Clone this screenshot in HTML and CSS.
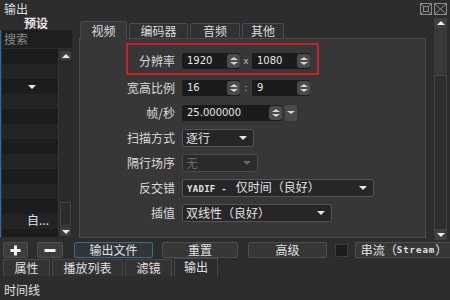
FILE: index.html
```html
<!DOCTYPE html>
<html>
<head>
<meta charset="utf-8">
<link rel="stylesheet" href="styles.css">
</head>
<body>
<div class="titlebar">
  <span class="title">输出</span>
  <span class="tb-icons">
    <svg width="12" height="12" viewBox="0 0 12 12"><rect x="0.5" y="0.5" width="11" height="11" fill="none" stroke="#8c8c8c"/><rect x="3.5" y="3.5" width="5" height="5" fill="none" stroke="#8c8c8c"/><path d="M0.5 0.5L3.5 3.5M11.5 0.5L8.5 3.5M0.5 11.5L3.5 8.5M11.5 11.5L8.5 8.5" stroke="#8c8c8c"/></svg>
    <svg width="13" height="12" viewBox="0 0 13 12"><rect x="0.5" y="0.5" width="12" height="11" fill="none" stroke="#8c8c8c"/><path d="M1 1L12 11M12 1L1 11" stroke="#8c8c8c"/></svg>
  </span>
</div>
<div class="main">
  <div class="left">
    <div class="preset-h">预设</div>
    <div class="leftbody">
      <div class="search">搜索</div>
      <div class="listwrap">
        <div class="list">
          <div class="row"></div>
          <div class="row alt"></div>
          <div class="row"><span class="tri-down"></span></div>
          <div class="row alt"></div>
          <div class="row"></div>
          <div class="row alt"></div>
          <div class="row"></div>
          <div class="row alt"></div>
          <div class="row"></div>
          <div class="row alt"></div>
          <div class="row"></div>
          <div class="row alt item"><span class="auto">自...</span></div>
          <div class="row"></div>
        </div>
        <div class="sbar small">
          <div class="sb-btn"><span class="tri-up-w"></span></div>
          <div class="sb-track"><div class="sb-thumb"></div></div>
          <div class="sb-btn"><span class="tri-down-w"></span></div>
        </div>
      </div>
    </div>
  </div>
  <div class="right">
    <div class="tabw">
      <div class="tabs">
        <div class="tab sel t1">视频</div>
        <div class="tab t2">编码器</div>
        <div class="tab t3">音频</div>
        <div class="tab t4">其他</div>
      </div>
      <div class="pane">
        <div class="redbox">
          <span class="lbl short">分辨率</span>
          <div class="spin"><span class="val">1920</span><span class="sbtn"><i class="up"></i><i class="dn"></i></span></div>
          <span class="sep">x</span>
          <div class="spin"><span class="val">1080</span><span class="sbtn"><i class="up"></i><i class="dn"></i></span></div>
        </div>
        <div class="frow">
          <span class="lbl">宽高比例</span>
          <div class="spin"><span class="val">16</span><span class="sbtn"><i class="up"></i><i class="dn"></i></span></div>
          <span class="sep">:</span>
          <div class="spin"><span class="val">9</span><span class="sbtn"><i class="up"></i><i class="dn"></i></span></div>
        </div>
        <div class="frow">
          <span class="lbl">帧/秒</span>
          <div class="spin wide"><span class="val">25.000000</span><span class="sbtn"><i class="up"></i><i class="dn"></i></span></div>
          <span class="ddbtn"><i class="dn"></i></span>
        </div>
        <div class="frow">
          <span class="lbl">扫描方式</span>
          <div class="combo w-scan"><span>逐行</span><i class="carrow"></i></div>
        </div>
        <div class="frow">
          <span class="lbl">隔行场序</span>
          <div class="combo w-field dis"><span>无</span><i class="carrow"></i></div>
        </div>
        <div class="frow">
          <span class="lbl">反交错</span>
          <div class="combo w-deint"><span><b class="mono">YADIF - </b>仅时间（良好）</span><i class="carrow"></i></div>
        </div>
        <div class="frow">
          <span class="lbl">插值</span>
          <div class="combo w-interp"><span>双线性（良好）</span><i class="carrow"></i></div>
        </div>
      </div>
    </div>
    <div class="sbar big">
      <div class="sb-btn"><span class="tri-up-w"></span></div>
      <div class="sb-upper"></div>
      <div class="sb-track2"></div>
      <div class="sb-btn"><span class="tri-down-w"></span></div>
    </div>
  </div>
</div>
<div class="btnrow">
  <div class="btn b-plus"><svg width="11" height="11" viewBox="0 0 11 11"><path d="M5.5 0.5V10.5M0.5 5.5H10.5" stroke="#f2f2f2" stroke-width="3"/></svg></div>
  <div class="btn b-minus"><svg width="12" height="11" viewBox="0 0 12 11"><path d="M0.5 5.5H11.5" stroke="#f2f2f2" stroke-width="3"/></svg></div>
  <div class="btn b-out">输出文件</div>
  <div class="btn b-reset">重置</div>
  <div class="btn b-adv">高级</div>
  <div class="chk"></div>
  <div class="btn b-stream">串流（<span class="mono2">Stream</span>）</div>
</div>
<div class="btabs">
  <div class="btab bt1">属性</div>
  <div class="btab bt2">播放列表</div>
  <div class="btab bt3">滤镜</div>
  <div class="btab bt4 sel">输出</div>
</div>
<div class="timeline">时间线</div>
</body>
</html>
```

FILE: styles.css
```css
* { box-sizing: border-box; }
html, body { margin: 0; padding: 0; }
body {
  width: 450px;
  height: 300px;
  overflow: hidden;
  background: #2d2d2d;
  color: #dcdcdc;
  font-family: "Noto Sans CJK SC", "Noto Sans", sans-serif;
  font-size: 12px;
  line-height: 16px;
}

/* title bar */
.titlebar {
  height: 16px;
  display: flex;
  align-items: center;
  padding-left: 4px;
  padding-right: 3px;
}
.title { line-height: 16px; margin-top: 2px; }
.tb-icons { margin-left: auto; display: flex; gap: 2px; margin-top: 2px; }
.tb-icons svg { display: block; }

/* main */
.main { display: flex; height: 224px; }
.left { width: 72px; display: flex; flex-direction: column; }
.preset-h {
  height: 14px;
  line-height: 14px;
  text-align: center;
  font-weight: bold;
  color: #e6e6e6;
}
.leftbody {
  border-left: 1px solid #2f6da6;
  padding-left: 1px;
  display: flex;
  flex-direction: column;
  height: 207px;
}
.search {
  height: 18px;
  line-height: 18px;
  background: #1e1e1e;
  color: #8a8a8a;
  padding-left: 2px;
}
.listwrap { display: flex; margin-top: 1px; height: 188px; }
.list { width: 56px; background: #1c1c1c; overflow: hidden; }
.row { height: 15px; background: #1c1c1c; display: flex; justify-content: center; align-items: center; }
.row.alt { background: #242424; }
.tri-down {
  width: 0; height: 0;
  border-left: 4px solid transparent;
  border-right: 4px solid transparent;
  border-top: 4px solid #e8e8e8;
  margin-left: 4px;
}
.row.item { justify-content: flex-start; align-items: flex-start; }
.auto {
  font-size: 12px;
  line-height: 13px;
  margin-left: 25px;
  margin-top: -1px;
  color: #cfe1f2;
}

/* scrollbars */
.sbar { display: flex; flex-direction: column; background: #2a2a2a; }
.sbar.small { width: 14px; border-left: 1px solid #353535; padding: 2px 1px 1px 1px; }
.sb-btn {
  height: 9px;
  background: #3f3f3f;
  display: flex;
  align-items: center;
  justify-content: center;
  border-radius: 1px;
}
.tri-up-w {
  width: 0; height: 0;
  border-left: 4px solid transparent;
  border-right: 4px solid transparent;
  border-bottom: 4px solid #eeeeee;
}
.tri-down-w {
  width: 0; height: 0;
  border-left: 4px solid transparent;
  border-right: 4px solid transparent;
  border-top: 4px solid #eeeeee;
}
.sb-track { flex: 1; display: flex; flex-direction: column; justify-content: flex-end; padding-bottom: 1px; }
.sb-thumb { height: 24px; border: 1px solid #464646; background: #2c2c2c; }

.sbar.big {
  width: 13px;
  margin-left: 8px;
  margin-top: 2px;
  height: 222px;
  background: #2b2b2b;
}
.sbar.big .sb-btn { height: 10px; }
.sb-upper { height: 47px; background: #393939; }
.sb-track2 { flex: 1; border: 1px solid #444444; background: #2e2e2e; }

/* right side */
.right { display: flex; margin-left: 7px; }
.tabw { width: 347px; margin-top: 4px; display: flex; flex-direction: column; }
.tabs { display: flex; align-items: flex-end; height: 18px; gap: 2px; padding-left: 1px; }
.tab {
  height: 15px;
  line-height: 14px;
  text-align: center;
  background: #313131;
  border: 1px solid #4a4a4a;
  border-bottom: none;
  border-radius: 2px 2px 0 0;
  color: #dedede;
}
.tab.sel {
  height: 18px;
  line-height: 18px;
  background: #373737;
  position: relative;
  top: 1px;
}
.t1 { width: 47px; }
.t2 { width: 59px; }
.t3 { width: 50px; }
.t4 { width: 42px; }

.pane {
  height: 200px;
  border: 1px solid #4a4a4a;
  background: #373737;
  padding-top: 4px;
}

.redbox {
  margin-left: 46px;
  width: 193px;
  height: 32px;
  border: 2px solid #c9212c;
  display: flex;
  align-items: flex-start;
  padding-top: 8px;
}
.lbl {
  width: 95px;
  text-align: right;
  margin-right: 7px;
  flex: none;
  color: #dadada;
  line-height: 16px;
}
.lbl.short { width: 47px; }
.frow { display: flex; align-items: center; height: 25px; }

.spin {
  display: flex;
  width: 58px;
  height: 16px;
  background: #1b1b1b;
  border-radius: 2px;
  flex: none;
}
.spin.wide { width: 100px; }
.val {
  flex: 1;
  padding-left: 5px;
  font-family: "DejaVu Sans", sans-serif;
  font-size: 10px;
  line-height: 16px;
  color: #e8e8e8;
}
.sbtn {
  width: 13px;
  margin: 1px 0 1px 1px;
  background: #4b4b4b;
  border-radius: 3px;
  display: flex;
  flex-direction: column;
  align-items: center;
  justify-content: center;
  gap: 2px;
}
i.up {
  display: block;
  width: 0; height: 0;
  border-left: 4px solid transparent;
  border-right: 4px solid transparent;
  border-bottom: 3px solid #d2d2d2;
}
i.dn {
  display: block;
  width: 0; height: 0;
  border-left: 4px solid transparent;
  border-right: 4px solid transparent;
  border-top: 3px solid #d2d2d2;
}
.sep {
  width: 12px;
  text-align: center;
  font-family: "DejaVu Sans", sans-serif;
  font-size: 9px;
  color: #bdbdbd;
  flex: none;
}
.ddbtn {
  width: 12px;
  height: 16px;
  margin-left: 3px;
  background: #4b4b4b;
  border-radius: 2px;
  display: flex;
  align-items: center;
  justify-content: center;
}

.combo {
  height: 18px;
  border: 1px solid #555555;
  border-radius: 3px;
  background: #262626;
  display: flex;
  align-items: center;
  padding-left: 3px;
  padding-right: 6px;
  color: #e2e2e2;
  line-height: 16px;
}
.carrow {
  margin-left: auto;
  width: 0; height: 0;
  border-left: 4px solid transparent;
  border-right: 4px solid transparent;
  border-top: 4px solid #e6e6e6;
}
.combo.dis { color: #6a6a6a; border-color: #4a4a4a; background: #2b2b2b; }
.combo.dis .carrow { border-top-color: #686868; }
.w-scan { width: 72px; }
.w-field { width: 76px; }
.w-deint { width: 192px; }
.w-interp { width: 150px; }
.mono {
  font-family: "DejaVu Sans Mono", monospace;
  font-size: 9px;
  font-weight: bold;
  letter-spacing: 0.3px;
  white-space: pre;
  padding-left: 1px;
  padding-right: 3px;
}

/* button row */
.btnrow { display: flex; align-items: center; height: 18px; padding-top: 2px; padding-left: 3px; }
.btn {
  height: 16px;
  background: #373737;
  border: 1px solid #4e4e4e;
  border-radius: 2px;
  display: flex;
  align-items: center;
  justify-content: center;
  color: #e2e2e2;
  line-height: 14px;
}
.b-plus { width: 25px; background: #3d3d3d; }
.b-minus { width: 26px; margin-left: 9px; background: #3d3d3d; }
.b-out { width: 79px; margin-left: 11px; border-color: #3e6a82; background: #30363a; }
.b-reset { width: 76px; margin-left: 9px; }
.b-adv { width: 79px; margin-left: 10px; }
.chk { width: 13px; height: 13px; margin-left: 8px; background: #1c1c1c; border: 1px solid #3c3c3c; }
.b-stream { width: 95px; margin-left: 7px; border-right: none; border-radius: 2px 0 0 2px; padding-left: 2px; }
.mono2 {
  font-family: "DejaVu Sans Mono", monospace;
  font-size: 9px;
  font-weight: bold;
  letter-spacing: 1px;
}

/* bottom tabs */
.btabs { display: flex; gap: 2px; padding-left: 3px; height: 18px; align-items: flex-end; }
.btab {
  height: 17px;
  line-height: 16px;
  text-align: center;
  background: #333333;
  border: 1px solid #474747;
  border-bottom: none;
  color: #e0e0e0;
}
.btab.sel { background: #2c2c2c; height: 18px; }
.bt1 { width: 47px; }
.bt2 { width: 71px; }
.bt3 { width: 47px; }
.bt4 { width: 44px; }

.timeline { padding-left: 4px; margin-top: 7px; line-height: 14px; color: #e0e0e0; }
```
